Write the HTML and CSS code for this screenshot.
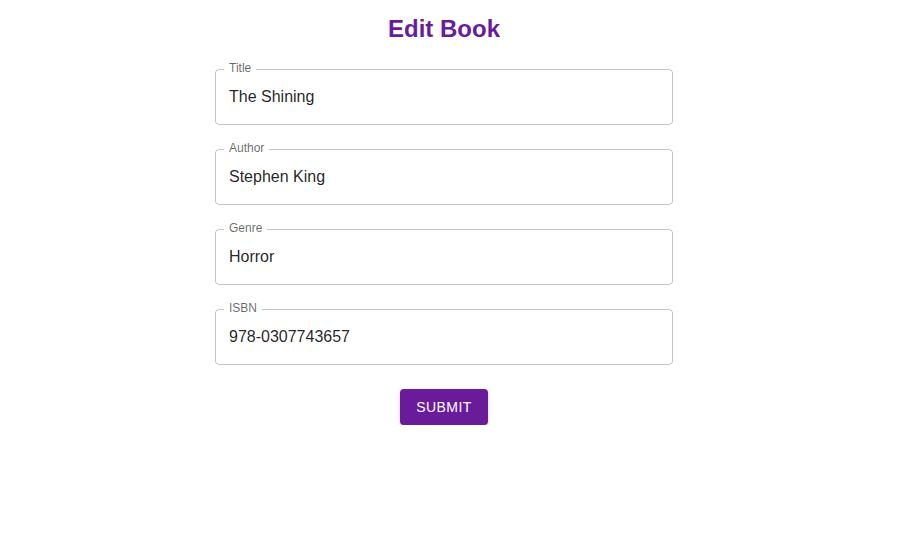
FILE: index.html
```html
<!DOCTYPE html>
<html>
<head>
<meta charset="utf-8">
<link rel="stylesheet" href="styles.css">
</head>
<body>
<main class="page">
  <h1 class="title">Edit Book</h1>
  <form class="form">
    <div class="field">
      <label class="field-label">Title</label>
      <input class="field-input" type="text" value="The Shining">
    </div>
    <div class="field">
      <label class="field-label">Author</label>
      <input class="field-input" type="text" value="Stephen King">
    </div>
    <div class="field">
      <label class="field-label">Genre</label>
      <input class="field-input" type="text" value="Horror">
    </div>
    <div class="field">
      <label class="field-label">ISBN</label>
      <input class="field-input" type="text" value="978-0307743657">
    </div>
    <div class="actions">
      <button class="submit" type="button">Submit</button>
    </div>
  </form>
</main>
</body>
</html>
```
FILE: styles.css
```css
html, body {
  margin: 0;
  padding: 0;
  background: #fff;
  font-family: "Liberation Sans", Arial, sans-serif;
}
.page {
  width: 458px;
  margin-left: 215px;
  padding-top: 15px;
}
.title {
  margin: 0 0 26px;
  font-size: 24px;
  line-height: 28px;
  font-weight: bold;
  color: #6a1b9a;
  text-align: center;
}
.form {
  display: flex;
  flex-direction: column;
  gap: 24px;
}
.field {
  position: relative;
  height: 56px;
  border: 1px solid rgba(0, 0, 0, 0.23);
  border-radius: 4px;
  box-sizing: border-box;
}
.field-label {
  position: absolute;
  left: 8px;
  top: -9px;
  padding: 0 5px;
  background: #fff;
  font-size: 12px;
  line-height: 14px;
  color: rgba(0, 0, 0, 0.6);
}
.field-input {
  display: block;
  width: 100%;
  height: 54px;
  box-sizing: border-box;
  border: 0;
  outline: none;
  background: transparent;
  padding: 0 13px;
  font-family: "Liberation Sans", Arial, sans-serif;
  font-size: 16px;
  color: rgba(0, 0, 0, 0.87);
}
.actions {
  display: flex;
  justify-content: center;
}
.submit {
  width: 88px;
  height: 36px;
  border: 0;
  border-radius: 4px;
  background: #6a1b9a;
  color: #fff;
  font-family: "Liberation Sans", Arial, sans-serif;
  font-size: 14px;
  font-weight: 500;
  letter-spacing: 0.4px;
  text-transform: uppercase;
  box-shadow: 0 3px 1px -2px rgba(0,0,0,0.2), 0 2px 2px 0 rgba(0,0,0,0.14), 0 1px 5px 0 rgba(0,0,0,0.12);
  cursor: pointer;
}
```
